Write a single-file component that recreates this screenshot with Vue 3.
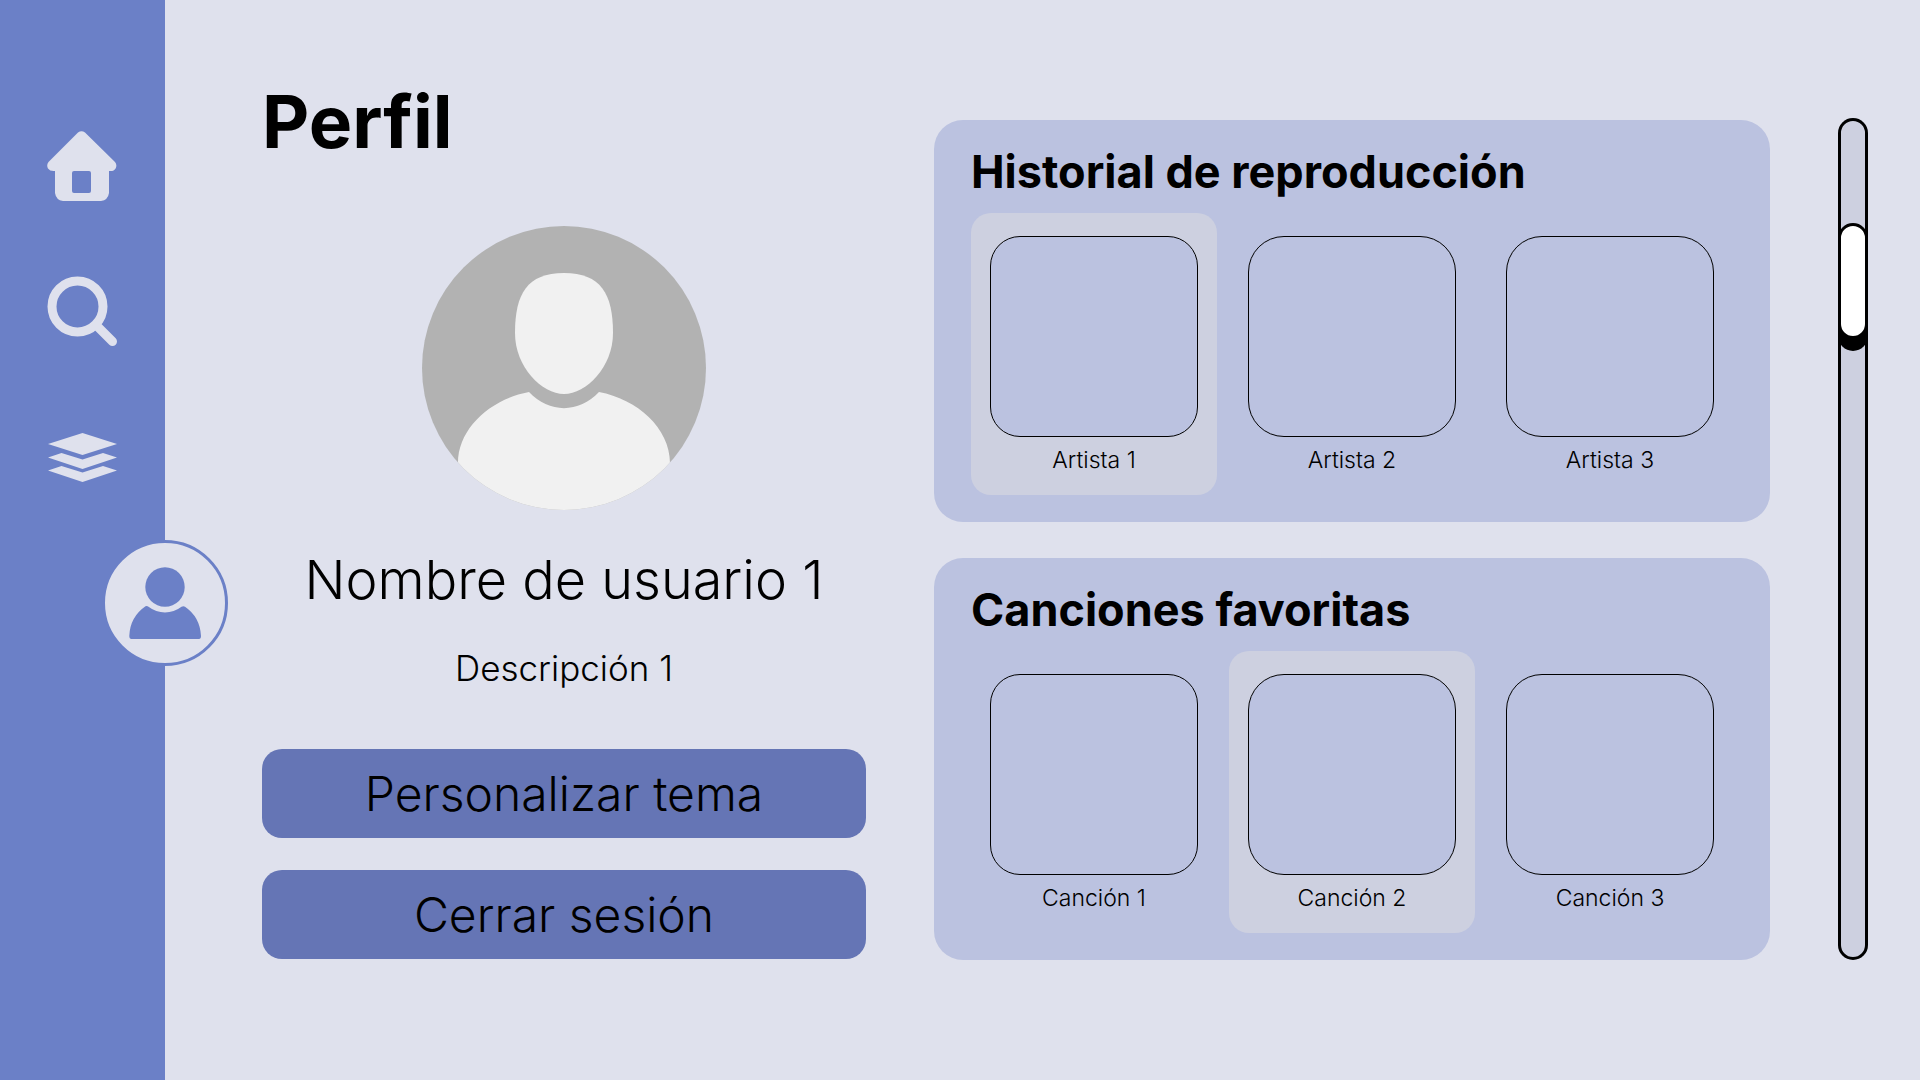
<script setup>
import { ref } from 'vue'

const position = ref(144)

const panels = [
  {
    title: 'Historial de reproducción',
    items: [
      { name: 'Artista 1', active: true },
      { name: 'Artista 2', active: false },
      { name: 'Artista 3', active: false },
    ],
  },
  {
    title: 'Canciones favoritas',
    items: [
      { name: 'Canción 1', active: false },
      { name: 'Canción 2', active: true },
      { name: 'Canción 3', active: false },
    ],
  },
]
</script>

<template>
  <div class="page">
    <nav class="sidebar">
      <a class="nav-link" href="#inicio" aria-label="Inicio">
        <svg viewBox="0 0 70 70" fill="#dfe1ed">
          <path fill-rule="evenodd" d="M31 1.6Q34.5-1.2 38 1.6L68 31Q70.400 34 68.600 37.500Q67 40.500 62 40V62Q61 69 54 70H16Q9 69 8 62V40Q3 40.500 1 37.500Q-.8 34 1.500 31ZM27 40Q25 40 25 42V60Q25 62 27 62H42Q44 62 44 60V42Q44 40 42 40Z" />
        </svg>
      </a>
      <a class="nav-link" href="#buscar" aria-label="Buscar">
        <svg viewBox="0 0 70 70" fill="none" stroke="#dfe1ed">
          <circle cx="30.500" cy="30.500" r="25.500" stroke-width="9" />
          <path d="M50 50L65.500 65.500" stroke-width="9" stroke-linecap="round" />
        </svg>
      </a>
      <a class="nav-link" href="#biblioteca" aria-label="Biblioteca">
        <svg viewBox="0 0 70 70" fill="#dfe1ed">
          <path d="M35.500 12L70 23L35.500 34L1 23Z" />
          <path d="M14.500 32L35.500 38.500L56 32L70 36.500L35.500 48L1 36.500Z" />
          <path d="M14.500 45L35.500 51.500L56 45L70 49.500L35.500 61L1 49.500Z" />
        </svg>
      </a>
      <a class="profile-link" href="#perfil" aria-label="Perfil" aria-current="page">
        <svg viewBox="0 0 126 126">
          <circle cx="63" cy="63" r="61.500" fill="#dfe1ed" stroke="#6b80c7" stroke-width="3" />
          <g fill="#6b80c7">
            <circle cx="63" cy="47" r="19.700" />
            <path d="M43.500 66.300Q45 65.500 46.500 66.800Q54 72.500 63 72.500Q72 72.500 79.500 66.800Q81.500 65.500 83 66.800Q98 77 99 96Q99 99 97 99H29.500Q27.300 99 27.300 96Q28 77 43.500 66.300Z" />
          </g>
        </svg>
      </a>
    </nav>

    <main class="content">
      <section class="profile">
        <h1>Perfil</h1>
        <svg class="avatar" viewBox="0 0 284 284" role="img" aria-label="Foto de perfil">
          <clipPath id="avatar-clip"><circle cx="142" cy="142" r="142" /></clipPath>
          <g clip-path="url(#avatar-clip)">
            <rect width="284" height="284" fill="#b2b2b2" />
            <g fill="#f1f1f1">
              <path d="M142 47C179 47 191 68 191 107C191 141 164 168 142 168C120 168 93 141 93 107C93 68 105 47 142 47Z" />
              <path d="M107 166C127 187.500 157 187.500 177 166C215 173 248 202 248 237V284H36V237C36 202 69 173 107 166Z" />
            </g>
          </g>
        </svg>
        <p class="user-name">Nombre de usuario 1</p>
        <p class="description">Descripción 1</p>
        <div class="actions">
          <button type="button">Personalizar tema</button>
          <button type="button">Cerrar sesión</button>
        </div>
      </section>

      <div class="panels">
        <section v-for="panel in panels" :key="panel.title" class="panel">
          <h2>{{ panel.title }}</h2>
          <ul class="cards">
            <li v-for="item in panel.items" :key="item.name" class="card" :class="{ active: item.active }">
              <div class="cover"></div>
              <span class="caption">{{ item.name }}</span>
            </li>
          </ul>
        </section>
      </div>

      <input v-model="position" class="scroller" type="range" min="0" max="1000" aria-label="Desplazamiento" />
    </main>
  </div>
</template>

<style>
body {
  margin: 0;
  background: #dfe1ed;
}
</style>

<style scoped>
.page {
  display: flex;
  min-height: 100vh;
  background: #dfe1ed;
  color: #000;
  font-family: Inter, "Open Sans", sans-serif;
  font-weight: 300;
}

.sidebar {
  box-sizing: border-box;
  display: flex;
  flex: 0 0 165px;
  flex-direction: column;
  align-items: center;
  gap: 75px;
  padding-top: 131px;
  background: #6b80c7;
}

.nav-link {
  width: 70px;
  height: 70px;
  margin-right: 2px;
}

.nav-link svg,
.profile-link svg {
  display: block;
  width: 100%;
  height: 100%;
}

.profile-link {
  z-index: 1;
  align-self: flex-end;
  width: 126px;
  height: 126px;
  margin: -26px -63px 0 0;
}

.content {
  display: grid;
  flex: 1;
  grid-template-columns: minmax(0, 604fr) minmax(0, 836fr) 30px;
  column-gap: 68px;
  align-content: start;
  align-items: start;
  padding: 86px 52px 86px 97px;
}

.profile {
  display: flex;
  flex-direction: column;
  align-items: center;
}

h1,
h2,
p {
  margin: 0;
}

h1 {
  align-self: flex-start;
  font-size: 73px;
  font-weight: 700;
  line-height: 72px;
}

.avatar {
  width: 284px;
  height: 284px;
  margin: 68px 0 40px;
}

.user-name {
  font-size: 54px;
  line-height: 60px;
  text-align: center;
}

.description {
  margin: 38px 0 61px;
  font-size: 35px;
  line-height: 40px;
}

.actions {
  display: flex;
  flex-direction: column;
  gap: 32px;
  align-self: stretch;
}

button {
  height: 89px;
  padding: 0;
  border: 0;
  border-radius: 20px;
  background: #6575b5;
  color: inherit;
  font: inherit;
  font-size: 48px;
}

.panels {
  display: flex;
  flex-direction: column;
  gap: 36px;
  margin-top: 34px;
}

.panel {
  padding: 28px 37px 27px;
  border-radius: 29px;
  background: #bbc2e0;
}

h2 {
  font-size: 45px;
  font-weight: 700;
  line-height: 48px;
}

.cards {
  display: grid;
  grid-template-columns: repeat(3, minmax(0, 1fr));
  gap: 12px;
  margin: 17px 0 0;
  padding: 0;
  list-style: none;
}

.card {
  display: flex;
  flex-direction: column;
  gap: 9px;
  padding: 23px 19px 21px;
  border-radius: 20px;
  text-align: center;
}

.card.active {
  background: #cdd0e0;
}

.cover {
  box-sizing: border-box;
  height: 201px;
  border: 1px solid #000;
  border-radius: 36px;
  background: #bbc2e0;
}

.card:first-child .cover {
  border-radius: 30px;
}

.caption {
  font-size: 23px;
  line-height: 28px;
}

.scroller {
  align-self: stretch;
  width: 30px;
  height: auto;
  min-height: 0;
  margin: 32px 0 0;
  border-radius: 15px;
  background: #cdd0e0;
  box-shadow: inset 0 0 0 3px #000;
  appearance: none;
  writing-mode: vertical-lr;
}

.scroller::-webkit-slider-thumb {
  box-sizing: border-box;
  width: 30px;
  height: 116px;
  border: 3px solid #000;
  border-radius: 15px;
  background: #fff;
  box-shadow: 0 12px 0 #000;
  appearance: none;
}
</style>
